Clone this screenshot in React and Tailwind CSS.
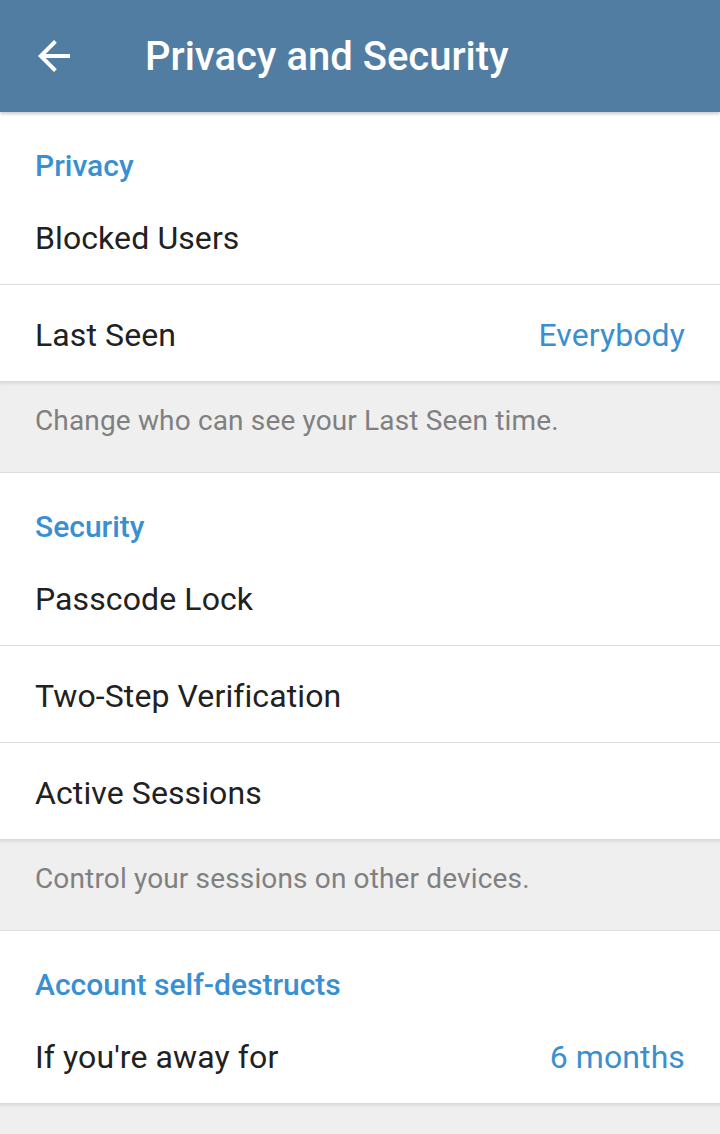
const font = { fontFamily: "Roboto, 'Noto Sans', sans-serif" }

function BackIcon() {
  return (
    <svg viewBox="0 0 24 24" className="h-12 w-12" fill="white">
      <path d="M20 11H7.83l5.59-5.59L12 4l-8 8 8 8 1.41-1.41L7.83 13H20v-2z" />
    </svg>
  )
}

function SectionHeader({ children }) {
  return (
    <div className="h-[76px] px-[35px] pt-[36px]">
      <p className="text-[30px] leading-[36px] font-medium text-[#3a8fd1]">{children}</p>
    </div>
  )
}

function Row({ label, value, divider }) {
  return (
    <>
      <div className="flex h-[96px] items-center justify-between px-[35px] pt-1">
        <span className="text-[32px] tracking-[0.1px] text-[#212121]">{label}</span>
        {value && <span className="text-[32px] tracking-[0.1px] text-[#3a8fd1]">{value}</span>}
      </div>
      {divider && <div className="h-px bg-[#dcdcdc]" />}
    </>
  )
}

function Hint({ children }) {
  return (
    <div className="h-[92px] border-b border-[#dedede] bg-[#efefef] px-[35px] pt-[22px] shadow-[inset_0_5px_4px_-3px_rgba(0,0,0,0.12)]">
      <p className="text-[28px] leading-[36px] tracking-[0.15px] text-[#808080]">{children}</p>
    </div>
  )
}

export default function App() {
  return (
    <div className="flex h-[1134px] w-[720px] flex-col overflow-hidden bg-[#efefef]" style={font}>
      <div className="relative z-10 flex h-[112px] shrink-0 items-center bg-[#527da3] shadow-[0_2px_3px_rgba(0,0,0,0.2)]">
        <div className="ml-[30px]">
          <BackIcon />
        </div>
        <h1 className="ml-[67px] mt-[2px] text-[40px] font-medium text-white">Privacy and Security</h1>
      </div>

      <div className="bg-white">
        <SectionHeader>Privacy</SectionHeader>
        <Row label="Blocked Users" divider />
        <Row label="Last Seen" value="Everybody" />
      </div>
      <Hint>Change who can see your Last Seen time.</Hint>

      <div className="bg-white">
        <SectionHeader>Security</SectionHeader>
        <Row label="Passcode Lock" divider />
        <Row label="Two-Step Verification" divider />
        <Row label="Active Sessions" />
      </div>
      <Hint>Control your sessions on other devices.</Hint>

      <div className="bg-white">
        <SectionHeader>Account self-destructs</SectionHeader>
        <Row label="If you're away for" value="6 months" />
      </div>
      <div className="flex-1 bg-[#efefef] shadow-[inset_0_5px_4px_-3px_rgba(0,0,0,0.12)]" />
    </div>
  )
}
